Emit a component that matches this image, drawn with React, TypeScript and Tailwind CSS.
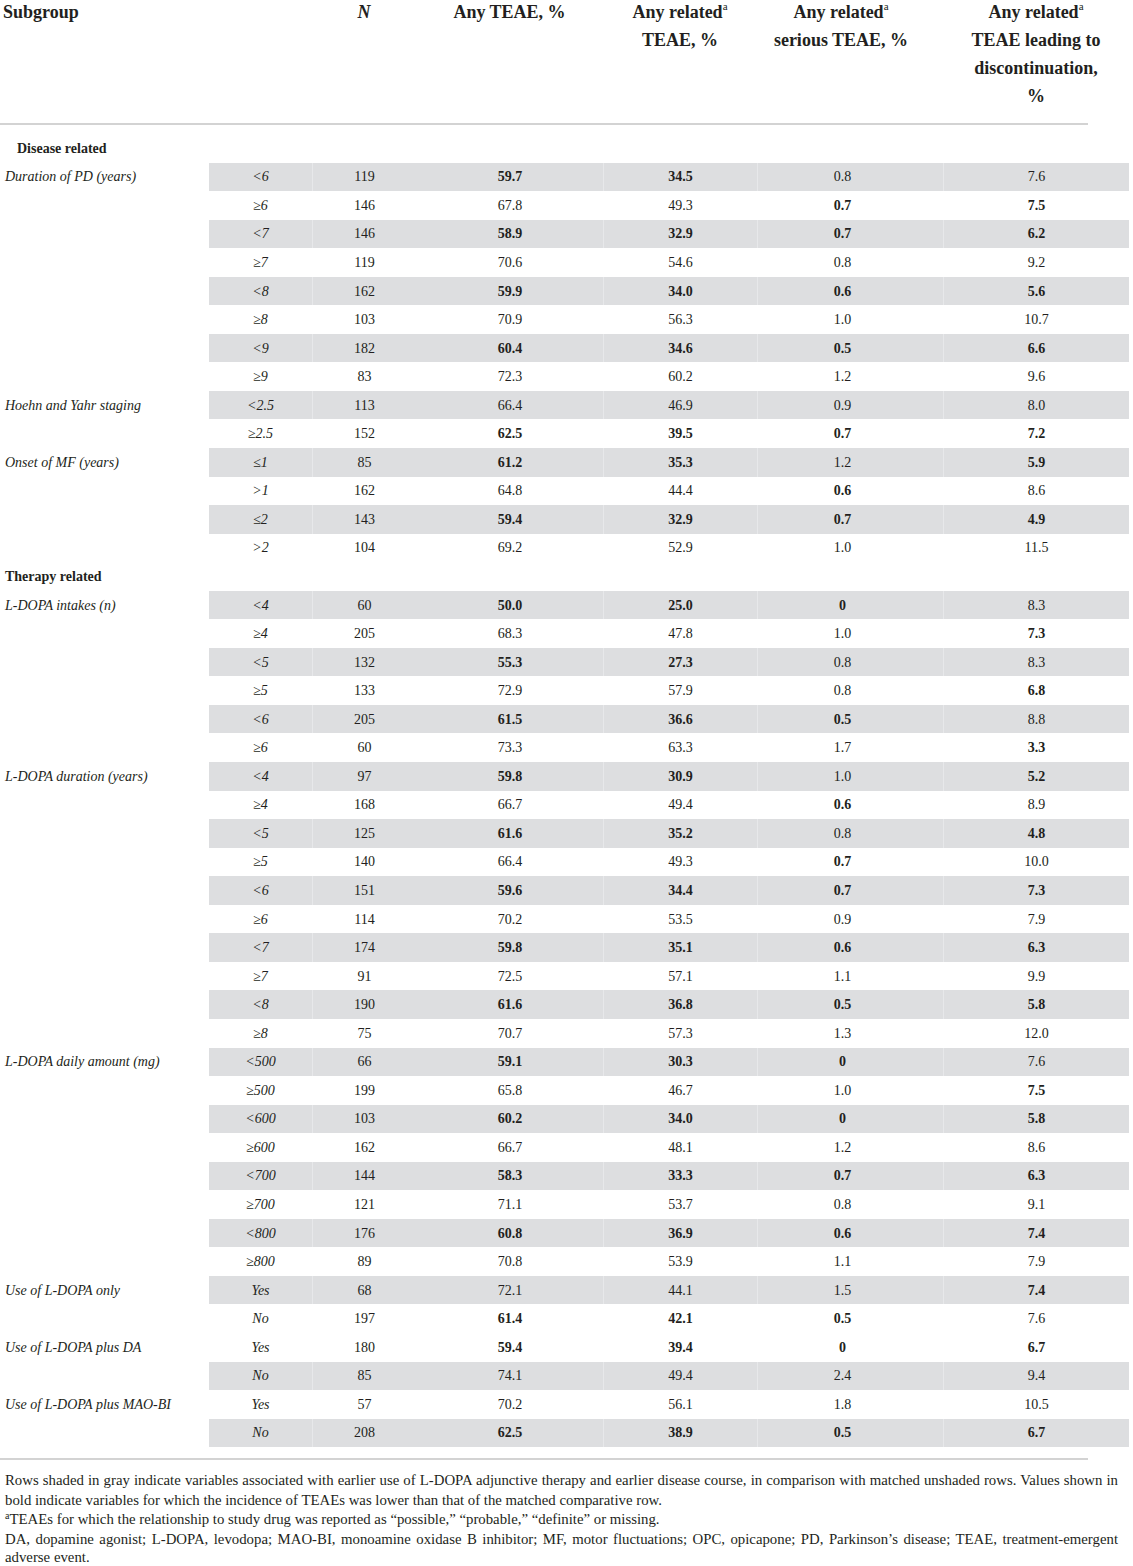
import React from 'react';

type Row = {
  label?: string;
  sub: string;
  shade: boolean;
  vals: string[]; // "*" prefix marks bold
};

type Section = { title: string; indent: string; rows: Row[] };

const sections: Section[] = [
  {
    title: 'Disease related',
    indent: 'pl-[17px]',
    rows: [
      { label: 'Duration of PD (years)', sub: '<6', shade: true, vals: ['119', '*59.7', '*34.5', '0.8', '7.6'] },
      { sub: '≥6', shade: false, vals: ['146', '67.8', '49.3', '*0.7', '*7.5'] },
      { sub: '<7', shade: true, vals: ['146', '*58.9', '*32.9', '*0.7', '*6.2'] },
      { sub: '≥7', shade: false, vals: ['119', '70.6', '54.6', '0.8', '9.2'] },
      { sub: '<8', shade: true, vals: ['162', '*59.9', '*34.0', '*0.6', '*5.6'] },
      { sub: '≥8', shade: false, vals: ['103', '70.9', '56.3', '1.0', '10.7'] },
      { sub: '<9', shade: true, vals: ['182', '*60.4', '*34.6', '*0.5', '*6.6'] },
      { sub: '≥9', shade: false, vals: ['83', '72.3', '60.2', '1.2', '9.6'] },
      { label: 'Hoehn and Yahr staging', sub: '<2.5', shade: true, vals: ['113', '66.4', '46.9', '0.9', '8.0'] },
      { sub: '≥2.5', shade: false, vals: ['152', '*62.5', '*39.5', '*0.7', '*7.2'] },
      { label: 'Onset of MF (years)', sub: '≤1', shade: true, vals: ['85', '*61.2', '*35.3', '1.2', '*5.9'] },
      { sub: '>1', shade: false, vals: ['162', '64.8', '44.4', '*0.6', '8.6'] },
      { sub: '≤2', shade: true, vals: ['143', '*59.4', '*32.9', '*0.7', '*4.9'] },
      { sub: '>2', shade: false, vals: ['104', '69.2', '52.9', '1.0', '11.5'] },
    ],
  },
  {
    title: 'Therapy related',
    indent: 'pl-[5px]',
    rows: [
      { label: 'L-DOPA intakes (n)', sub: '<4', shade: true, vals: ['60', '*50.0', '*25.0', '*0', '8.3'] },
      { sub: '≥4', shade: false, vals: ['205', '68.3', '47.8', '1.0', '*7.3'] },
      { sub: '<5', shade: true, vals: ['132', '*55.3', '*27.3', '0.8', '8.3'] },
      { sub: '≥5', shade: false, vals: ['133', '72.9', '57.9', '0.8', '*6.8'] },
      { sub: '<6', shade: true, vals: ['205', '*61.5', '*36.6', '*0.5', '8.8'] },
      { sub: '≥6', shade: false, vals: ['60', '73.3', '63.3', '1.7', '*3.3'] },
      { label: 'L-DOPA duration (years)', sub: '<4', shade: true, vals: ['97', '*59.8', '*30.9', '1.0', '*5.2'] },
      { sub: '≥4', shade: false, vals: ['168', '66.7', '49.4', '*0.6', '8.9'] },
      { sub: '<5', shade: true, vals: ['125', '*61.6', '*35.2', '0.8', '*4.8'] },
      { sub: '≥5', shade: false, vals: ['140', '66.4', '49.3', '*0.7', '10.0'] },
      { sub: '<6', shade: true, vals: ['151', '*59.6', '*34.4', '*0.7', '*7.3'] },
      { sub: '≥6', shade: false, vals: ['114', '70.2', '53.5', '0.9', '7.9'] },
      { sub: '<7', shade: true, vals: ['174', '*59.8', '*35.1', '*0.6', '*6.3'] },
      { sub: '≥7', shade: false, vals: ['91', '72.5', '57.1', '1.1', '9.9'] },
      { sub: '<8', shade: true, vals: ['190', '*61.6', '*36.8', '*0.5', '*5.8'] },
      { sub: '≥8', shade: false, vals: ['75', '70.7', '57.3', '1.3', '12.0'] },
      { label: 'L-DOPA daily amount (mg)', sub: '<500', shade: true, vals: ['66', '*59.1', '*30.3', '*0', '7.6'] },
      { sub: '≥500', shade: false, vals: ['199', '65.8', '46.7', '1.0', '*7.5'] },
      { sub: '<600', shade: true, vals: ['103', '*60.2', '*34.0', '*0', '*5.8'] },
      { sub: '≥600', shade: false, vals: ['162', '66.7', '48.1', '1.2', '8.6'] },
      { sub: '<700', shade: true, vals: ['144', '*58.3', '*33.3', '*0.7', '*6.3'] },
      { sub: '≥700', shade: false, vals: ['121', '71.1', '53.7', '0.8', '9.1'] },
      { sub: '<800', shade: true, vals: ['176', '*60.8', '*36.9', '*0.6', '*7.4'] },
      { sub: '≥800', shade: false, vals: ['89', '70.8', '53.9', '1.1', '7.9'] },
      { label: 'Use of L-DOPA only', sub: 'Yes', shade: true, vals: ['68', '72.1', '44.1', '1.5', '*7.4'] },
      { sub: 'No', shade: false, vals: ['197', '*61.4', '*42.1', '*0.5', '7.6'] },
      { label: 'Use of L-DOPA plus DA', sub: 'Yes', shade: false, vals: ['180', '*59.4', '*39.4', '*0', '*6.7'] },
      { sub: 'No', shade: true, vals: ['85', '74.1', '49.4', '2.4', '9.4'] },
      { label: 'Use of L-DOPA plus MAO-BI', sub: 'Yes', shade: false, vals: ['57', '70.2', '56.1', '1.8', '10.5'] },
      { sub: 'No', shade: true, vals: ['208', '*62.5', '*38.9', '*0.5', '*6.7'] },
    ],
  },
];

const grid = 'grid grid-cols-[209px_103px_104px_187px_154px_186px_186px]';

// which value columns get the faint divider on shaded rows
const dividers = [true, false, true, true, true];
// the serious-TEAE column sits a little left of its cell centre
const nudge = ['', '', '', 'pr-[16px]', ''];

const Sup = () => <sup className="text-[11px] font-normal relative -top-[8px]">a</sup>;

const DataRow = ({ row }: { row: Row }) => {
  const bg = row.shade ? 'bg-[#dddee0]' : '';
  return (
    <div className={`${grid} h-[28.55px] items-stretch`}>
      <div className="flex items-center pl-[5px] italic whitespace-nowrap">{row.label}</div>
      <div className={`${bg} flex items-center justify-center italic`}>{row.sub}</div>
      {row.vals.map((v, i) => {
        const bold = v.startsWith('*');
        const line = row.shade && dividers[i] ? 'border-l border-[#e7e8ea]' : 'border-l border-transparent';
        return (
          <div key={i} className={`${bg} ${line} ${nudge[i]} flex items-center justify-center ${bold ? 'font-bold' : ''}`}>
            {bold ? v.slice(1) : v}
          </div>
        );
      })}
    </div>
  );
};

export default function App() {
  return (
    <div className="w-[1133px] bg-white text-[#231f20] font-['Liberation_Serif',serif] text-[14px]">
      {/* header */}
      <div className={`${grid} h-[125px] -mt-[2px] text-[18px] leading-[28px] font-bold text-center`}>
        <div className="text-left pl-[3px]">Subgroup</div>
        <div></div>
        <div className="italic">N</div>
        <div>Any TEAE, %</div>
        <div>
          Any related<Sup />
          <br />
          TEAE, %
        </div>
        <div className="pr-[18px]">
          Any related<Sup />
          <br />
          serious TEAE, %
        </div>
        <div>
          Any related<Sup />
          <br />
          TEAE leading to
          <br />
          discontinuation,
          <br />%
        </div>
      </div>
      <div className="w-[1088px] h-[2px] bg-[#d3d3d3]" />
      <div className="h-[9px]" />

      {sections.map((s) => (
        <div key={s.title}>
          <div className={`h-[28.55px] flex items-center font-bold ${s.indent}`}>{s.title}</div>
          {s.rows.map((r, i) => (
            <DataRow key={i} row={r} />
          ))}
        </div>
      ))}

      <div className="h-[11px]" />
      <div className="w-[1088px] h-[2px] bg-[#d3d3d3]" />

      {/* footnotes */}
      <div className="w-[1118px] pt-[11px] pl-[5px] text-[14.8px] leading-[19.5px]">
        <div className="text-justify [text-align-last:justify]">
          Rows shaded in gray indicate variables associated with earlier use of L-DOPA adjunctive therapy and earlier
          disease course, in comparison with matched unshaded rows. Values shown in
        </div>
        <div>bold indicate variables for which the incidence of TEAEs was lower than that of the matched comparative row.</div>
        <div>
          <sup className="text-[10px] relative -top-[5px]">a</sup>TEAEs for which the relationship to study drug was
          reported as “possible,” “probable,” “definite” or missing.
        </div>
        <div className="text-justify [text-align-last:justify]">
          DA, dopamine agonist; L-DOPA, levodopa; MAO-BI, monoamine oxidase B inhibitor; MF, motor fluctuations; OPC,
          opicapone; PD, Parkinson’s disease; TEAE, treatment-emergent
        </div>
        <div className="leading-[17px]">adverse event.</div>
      </div>
    </div>
  );
}
